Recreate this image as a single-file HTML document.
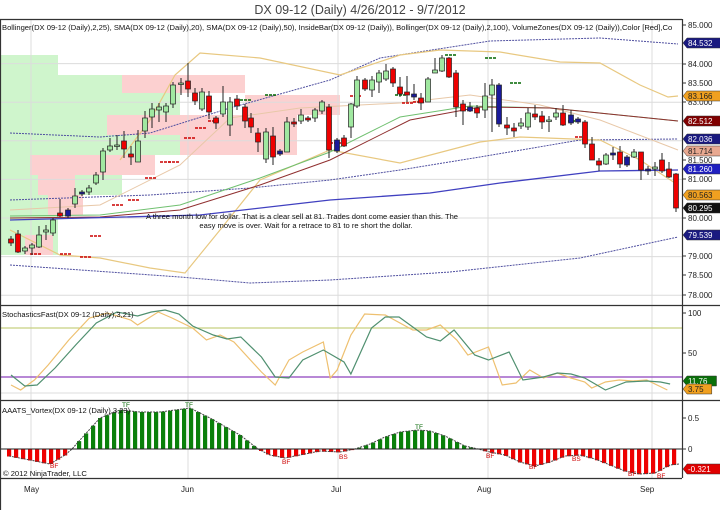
<!DOCTYPE html>
<html><head><meta charset="utf-8"><style>
html,body{margin:0;padding:0;background:#fff;width:720px;height:510px;overflow:hidden}
svg{display:block;font-family:"Liberation Sans",sans-serif}
</style></head><body>
<svg id="s" width="720" height="510" viewBox="0 0 720 510" xmlns="http://www.w3.org/2000/svg">
<rect width="720" height="510" fill="#fff"/>
<g id="bg"></g>
<g id="grid" stroke="#dcdcdc" stroke-width="1"></g>
<g id="lines" fill="none"></g>
<g id="cand"></g>
<g id="vort"></g>
<g id="frame" stroke="#333" fill="none" stroke-width="1.2">
<line x1="0.5" y1="19" x2="0.5" y2="510"/>
<line x1="0" y1="19.5" x2="682" y2="19.5"/>
<line x1="682.5" y1="19" x2="682.5" y2="478"/>
<line x1="0" y1="305.5" x2="720" y2="305.5"/>
<line x1="0" y1="400.5" x2="720" y2="400.5"/>
<line x1="0" y1="478.5" x2="682" y2="478.5"/>
</g>
<g font-size="12.5" fill="#444"><text x="360" y="14" text-anchor="middle">DX 09-12 (Daily)  4/26/2012 - 9/7/2012</text></g>
<g font-size="7.6" fill="#111">
<text x="2" y="30">Bollinger(DX 09-12 (Daily),2,25), SMA(DX 09-12 (Daily),20), SMA(DX 09-12 (Daily),50), InsideBar(DX 09-12 (Daily)), Bollinger(DX 09-12 (Daily),2,100), VolumeZones(DX 09-12 (Daily)),Color [Red],Co</text>
<text x="2" y="317">StochasticsFast(DX 09-12 (Daily),3,21)</text>
<text x="2" y="413">AAATS_Vortex(DX 09-12 (Daily),3,23)</text>
<text x="3" y="476">© 2012 NinjaTrader, LLC</text>
<text x="302" y="219" text-anchor="middle">A three month low for dollar. That is a clear sell at 81. Trades dont come easier than this. The</text>
<text x="306" y="228" text-anchor="middle">easy move is over. Wait for a retrace to 81 to re short the dollar.</text>
</g>
<g id="axis" font-size="8" fill="#222"></g>
<g font-size="8" fill="#222">
<text x="24" y="492">May</text><text x="181" y="492">Jun</text><text x="331" y="492">Jul</text><text x="477" y="492">Aug</text><text x="640" y="492">Sep</text>
</g>
<g font-size="6.5" fill="#c00">
<text x="122" y="407" fill="#060">TF</text><text x="185" y="407" fill="#060">TF</text><text x="415" y="429" fill="#060">TF</text>
<text x="50" y="468">BF</text><text x="282" y="464">BF</text><text x="339" y="459">BS</text><text x="486" y="458">BF</text><text x="529" y="469">BF</text><text x="572" y="461">BS</text><text x="628" y="476">BF</text><text x="657" y="478">BF</text>
</g>
</svg>
<script>
const NS="http://www.w3.org/2000/svg";
function el(p,t,a,txt){const e=document.createElementNS(NS,t);for(const k in a)e.setAttribute(k,a[k]);if(txt!==undefined)e.textContent=txt;document.getElementById(p).appendChild(e);return e;}
// backgrounds
[[0,55,58,200],[58,75,64,120],[122,75,58,80]].forEach(r=>el('bg','rect',{x:r[0],y:r[1],width:r[2],height:r[3],fill:'#cff5cc'}));
[[122,75,123,18],[107,115,190,20],[180,135,117,20],[245,95,95,20],[30,155,125,20],[38,175,37,20],[48,195,35,20],[25,235,28,20]].forEach(r=>el('bg','rect',{x:r[0],y:r[1],width:r[2],height:r[3],fill:'#fcd0d0'}));
// grid
[31,188,338,488,652].forEach(x=>el('grid','line',{x1:x,y1:20,x2:x,y2:478}));
const py=p=>25+(85-p)*38.6;
[84,83,82,81,80,79,78].forEach(p=>el('grid','line',{x1:0,y1:py(p),x2:682,y2:py(p)}));
el('grid','line',{x1:0,y1:393,x2:682,y2:393});
// lines
function pl(pts,c,w,d){el('lines','polyline',{points:pts.map(p=>p.join(',')).join(' '),stroke:c,'stroke-width':w||1,'stroke-dasharray':d||'none'});}
pl([[10,133],[100,137],[150,133],[230,108],[330,80],[380,58],[490,41],[600,38],[678,44]],'#5050a0',1,'2,1');
pl([[10,265],[180,277],[250,283],[330,280],[450,272],[580,258],[678,237]],'#5050a0',1,'2,1');
pl([[10,200],[150,195],[250,188],[330,180],[400,170],[480,157],[580,140],[678,139]],'#5050a0',1,'2,1');
pl([[120,160],[150,120],[175,75],[200,53],[260,58],[340,75],[400,55],[440,50],[500,52],[560,62],[600,63],[640,85],[668,97],[678,96]],'#e8c880',1.2);
pl([[10,230],[60,255],[100,258],[150,268],[185,273],[220,230],[260,180],[330,150],[400,163],[480,142],[520,137],[600,140],[640,160],[678,185]],'#e8c880',1.2);
pl([[10,210],[100,205],[180,165],[230,118],[300,108],[400,103],[470,95],[540,105],[600,120],[678,150]],'#e8c8a8',1);
pl([[10,216],[100,215],[180,205],[260,178],[330,152],[400,117],[470,106],[550,108],[678,121]],'#70c070',1);
pl([[10,218],[100,217],[180,210],[260,185],[330,160],[410,120],[480,107],[550,108],[678,121]],'#903030',1);
pl([[10,220],[200,215],[330,200],[430,193],[500,183],[600,171],[678,170]],'#4040c0',1.3);
// inside bar dashes
[[30,254,'#c00'],[60,254,'#c00'],[80,257,'#c00'],[90,236,'#c00'],[112,205,'#c00'],[128,200,'#c00'],[145,178,'#c00'],[160,162,'#c00'],[168,162,'#c00'],[184,138,'#c00'],[195,128,'#c00'],[208,121,'#c00'],[240,100,'#060'],[265,95,'#060'],[350,96,'#c00'],[395,95,'#060'],[445,55,'#060'],[510,83,'#060'],[402,103,'#c00'],[413,102,'#c00'],[568,121,'#060'],[330,143,'#c00'],[575,137,'#c00'],[485,58,'#060']].forEach(d=>el('lines','line',{x1:d[0],y1:d[1],x2:d[0]+12,y2:d[1],stroke:d[2],'stroke-width':1.5,'stroke-dasharray':'3,1'}));
// candles x,o,c,h,l,color
const C=[[11,239,243,236,246,'r'],[18,234,252,230,253,'r'],[25,248,251,246,254,'g'],[32,245,248,243,255,'g'],[39,235,247,226,248,'g'],[46,230,232,225,240,'g'],[53,220,233,218,236,'g'],[60,213,216,199,217,'r'],[68,210,216,208,218,'b'],[75,196,204,188,208,'g'],[82,192,194,190,196,'b'],[89,188,192,185,195,'g'],[96,175,183,172,185,'g'],[103,151,172,148,180,'g'],[110,146,150,138,152,'g'],[117,145,146,135,150,'g'],[124,141,149,131,158,'r'],[131,154,157,146,165,'r'],[138,141,162,130,162,'g'],[145,118,131,111,138,'g'],[152,109,117,103,128,'g'],[159,107,110,103,122,'g'],[166,106,112,103,122,'g'],[173,85,104,82,108,'g'],[181,83,84,78,95,'g'],[188,81,89,63,97,'r'],[195,93,101,88,105,'r'],[202,92,109,88,111,'g'],[209,96,112,91,119,'r'],[216,118,123,116,129,'r'],[223,102,114,86,117,'g'],[230,102,125,97,136,'g'],[237,99,106,95,110,'r'],[245,107,121,104,128,'r'],[251,118,127,113,133,'r'],[258,133,142,128,152,'r'],[266,132,159,128,163,'g'],[273,136,157,127,165,'r'],[280,151,154,149,156,'b'],[287,122,152,117,152,'g'],[294,122,124,118,127,'r'],[301,115,121,109,124,'g'],[308,118,120,116,122,'r'],[315,110,118,108,122,'g'],[322,102,111,100,114,'g'],[329,107,150,104,158,'r'],[337,140,151,138,153,'b'],[344,138,146,135,147,'r'],[351,104,127,103,138,'g'],[357,80,106,76,108,'g'],[365,80,89,78,91,'r'],[372,80,90,76,97,'g'],[379,73,82,70,93,'g'],[386,71,79,64,81,'g'],[393,69,83,67,87,'r'],[400,87,94,77,97,'r'],[407,92,95,76,102,'r'],[414,94,97,84,100,'b'],[421,98,103,93,110,'r'],[428,79,102,77,102,'g'],[435,70,73,58,73,'g'],[442,58,71,55,72,'g'],[449,58,77,57,78,'r'],[456,73,107,70,117,'r'],[463,104,111,100,125,'r'],[470,107,111,102,112,'b'],[477,108,113,105,118,'r'],[485,96,110,83,118,'g'],[492,85,95,79,132,'g'],[499,85,124,83,127,'b'],[507,125,128,117,135,'r'],[514,128,131,123,137,'r'],[521,123,126,118,129,'g'],[528,113,127,108,130,'g'],[535,114,117,105,120,'r'],[542,116,122,111,129,'r'],[549,120,121,116,132,'g'],[556,113,117,108,120,'g'],[563,113,125,105,126,'r'],[571,115,123,110,125,'b'],[578,119,122,117,124,'b'],[585,122,144,120,148,'r'],[592,144,160,137,160,'r'],[599,161,165,158,171,'r'],[606,155,164,153,165,'g'],[613,153,155,147,160,'b'],[620,152,164,146,168,'r'],[627,157,165,155,167,'b'],[634,152,157,149,158,'g'],[641,152,170,152,180,'r'],[648,169,171,166,175,'b'],[655,167,169,162,176,'g'],[662,160,171,153,173,'r'],[669,169,177,162,178,'r'],[676,174,208,173,212,'r']];
const col={r:'#ee0000',g:'#a0e8a0',b:'#1a1a9a'};
C.forEach(c=>{el('cand','line',{x1:c[0],y1:c[3],x2:c[0],y2:c[4],stroke:'#222','stroke-width':1});const t=Math.min(c[1],c[2]),h=Math.max(1.5,Math.abs(c[2]-c[1]));el('cand','rect',{x:c[0]-2.5,y:t,width:5,height:h,fill:col[c[5]],stroke:'#222','stroke-width':0.7});});
// stochastics
const k=1.376;
const g=[[8,375],[18,386],[27,385],[40,368],[55,345],[70,323],[85,312],[100,316],[110,312],[120,310],[130,314],[140,326],[155,335],[165,339],[175,337],[190,357],[200,377],[210,378],[220,360],[235,350],[250,362],[255,374],[270,328],[280,317],[290,317],[300,327],[310,337],[320,341],[330,330],[345,355],[355,360],[370,352],[380,380],[395,377],[405,373],[415,374],[425,378],[440,390],[455,382],[470,381],[480,382],[487,384]];
const t=[[8,385],[15,390],[25,380],[35,365],[50,340],[65,318],[78,313],[95,320],[100,325],[115,312],[125,318],[140,328],[150,340],[160,335],[170,342],[190,372],[200,385],[210,360],[220,352],[235,342],[240,378],[245,370],[255,335],[265,314],[280,315],[300,330],[310,330],[320,325],[332,340],[340,355],[355,347],[365,385],[375,383],[385,370],[395,378],[405,373],[415,378],[425,382],[430,388],[440,382],[450,380],[460,381],[470,380],[485,390]];
el('lines','line',{x1:0,y1:328,x2:682,y2:328,stroke:'#c8d080','stroke-width':1.2});
el('lines','line',{x1:0,y1:377,x2:682,y2:377,stroke:'#a060c8','stroke-width':1.5});
pl(t.map(p=>[p[0]*k,p[1]]),'#eec070',1.2);
pl(g.map(p=>[p[0]*k,p[1]]),'#509070',1.2);
// vortex
const V=[[9,456],[30,460],[50,464],[65,455],[72,449],[80,440],[100,418],[120,410],[140,412],[160,412],[175,410],[190,408],[210,418],[240,435],[258,449],[270,455],[285,458],[300,455],[320,451],[340,452],[355,449],[370,444],[385,437],[400,432],[418,430],[430,431],[445,436],[465,446],[478,449],[490,452],[505,455],[520,462],[535,466],[550,462],[565,456],[580,455],[595,459],[610,465],[625,471],[640,474],[655,473],[670,465],[679,464]];
function vy(x){for(let i=0;i<V.length-1;i++){if(x>=V[i][0]&&x<=V[i+1][0]){const f=(x-V[i][0])/(V[i+1][0]-V[i][0]);return V[i][1]+f*(V[i+1][1]-V[i][1]);}}return 449;}
for(let x=9;x<=680;x+=7){const y=vy(x);el('vort','rect',{x:x-2,y:Math.min(y,449),width:4.2,height:Math.abs(y-449)+0.5,fill:y<449?'#0a800a':'#ee0000'});}
el('vort','polyline',{points:V.map(p=>p.join(',')).join(' '),fill:'none',stroke:'#444','stroke-width':1,'stroke-dasharray':'2,1'});
el('vort','line',{x1:0,y1:449,x2:682,y2:449,stroke:'#222','stroke-width':1});
// axis
const A=[['85.000',25],['84.000',64],['83.500',83],['83.000',102],['81.500',160],['81.000',179],['80.000',218],['79.000',256],['78.500',275],['78.000',295],['100',313],['50',353],['0.5',418],['0',449]];
A.forEach(a=>{el('axis','line',{x1:682,y1:a[1],x2:686,y2:a[1],stroke:'#333'});el('axis','text',{x:688,y:a[1]+3},a[0]);});
const T=[['84.532',43,'#1a1a80','#fff'],['83.166',96,'#f0a020','#222'],['82.512',121,'#800000','#fff'],['82.036',139,'#1a1a80','#fff'],['81.714',151,'#e8a890','#222'],['81.260',169,'#2020c0','#fff'],['80.563',195,'#f0a020','#222'],['80.295',208,'#111','#fff'],['79.539',235,'#1a1a80','#fff'],['11.76',381,'#0a700a','#fff'],['3.75',389,'#f0a020','#222'],['-0.321',469,'#e00000','#fff']];
T.forEach(a=>{const w=a[0].length*4.7+6;el('axis','path',{d:`M683,${a[1]} l4,-5 h${w} v10 h-${w} z`,fill:a[2],stroke:'#333','stroke-width':0.5});el('axis','text',{x:688,y:a[1]+3,fill:a[3]},a[0]);});
</script>
</body></html>
